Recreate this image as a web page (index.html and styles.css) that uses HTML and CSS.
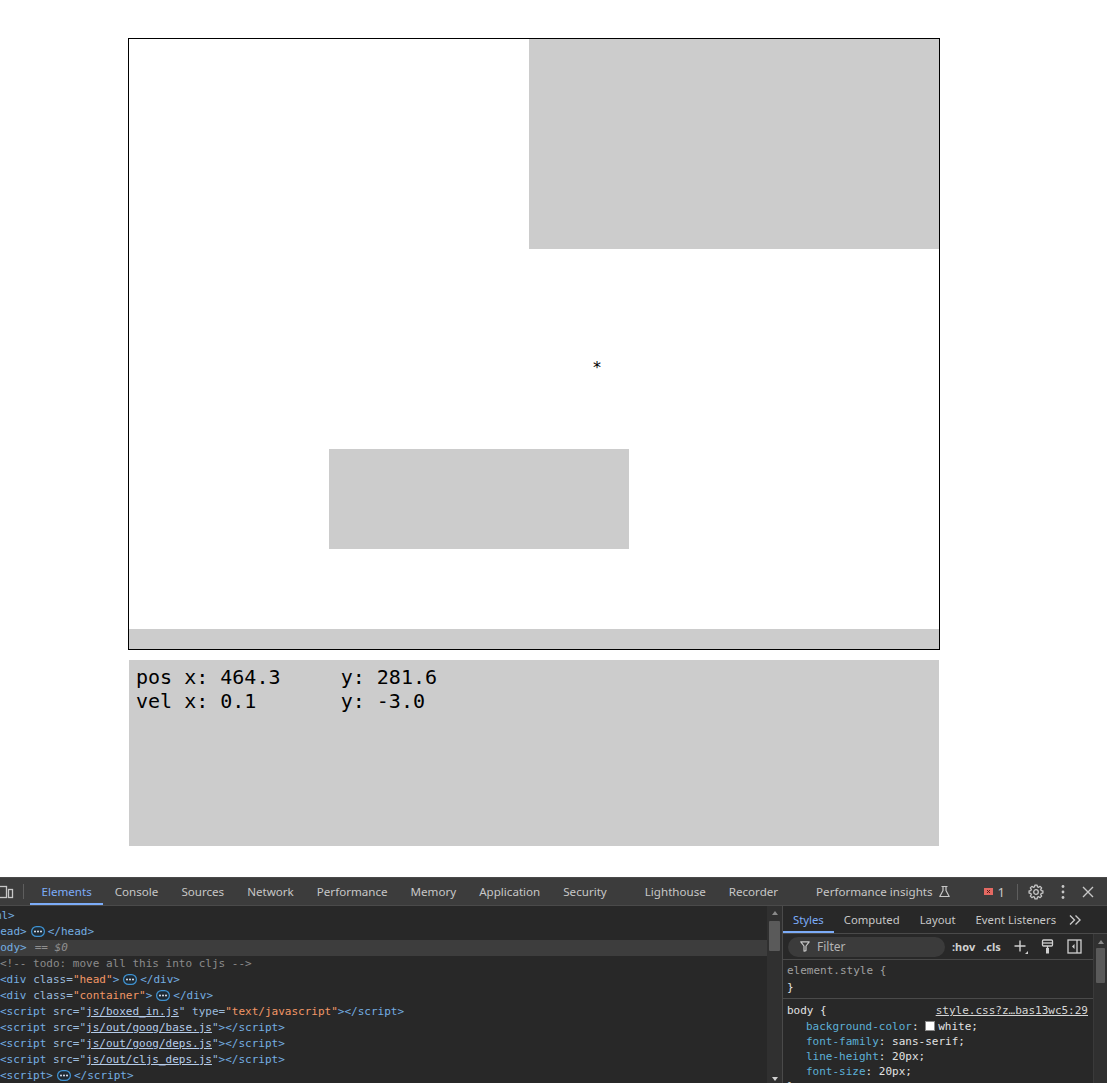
FILE: index.html
```html
<!DOCTYPE html>
<html>
<head>
<meta charset="utf-8">
<title>boxed in</title>
<link rel="stylesheet" href="styles.css">
</head>
<body>
<div class="viewport">
  <div class="app">
    <div class="stage">
      <div class="block block-a"></div>
      <div class="block block-b"></div>
      <span class="ship">*</span>
      <div class="floor"></div>
    </div>
    <div class="info"><div>pos x: 464.3     y: 281.6</div><div>vel x: 0.1       y: -3.0</div></div>
  </div>
</div>

<div class="devtools">
  <div class="dt-toolbar">
    <div class="dt-device">
      <svg width="22" height="16" viewBox="0 0 22 16"><rect x="1.5" y="2.5" width="12" height="11" fill="none" stroke="#c7c7c7" stroke-width="1.3"/><rect x="15.5" y="5.5" width="4" height="8" fill="none" stroke="#c7c7c7" stroke-width="1.3"/></svg>
    </div>
    <div class="dt-sep"></div>
    <div class="dt-tabs">
      <div class="dt-tab active">Elements</div>
      <div class="dt-tab">Console</div>
      <div class="dt-tab">Sources</div>
      <div class="dt-tab">Network</div>
      <div class="dt-tab">Performance</div>
      <div class="dt-tab">Memory</div>
      <div class="dt-tab">Application</div>
      <div class="dt-tab">Security</div>
      <div class="dt-tab wide">Lighthouse</div>
      <div class="dt-tab">Recorder</div>
      <div class="dt-tab wide">Performance insights<svg class="flask" width="13" height="13" viewBox="0 0 13 13"><path d="M3.5 1.5h6M5 1.5v4L1.8 11.5h9.4L8 5.5v-4" fill="none" stroke="#c7c7c7" stroke-width="1.2" stroke-linejoin="round"/></svg></div>
    </div>
    <div class="dt-right">
      <div class="err"><svg width="9" height="7" viewBox="0 0 9 7"><rect width="9" height="7" fill="#e46962"/><path d="M3 2l3 3M6 2l-3 3" stroke="#5c1d1a" stroke-width="1"/></svg><span>1</span></div>
      <div class="dt-sep small"></div>
      <svg class="gear" width="16" height="16" viewBox="0 0 16 16"><polygon points="13.19,6.51 14.91,6.91 14.91,9.09 13.19,9.49 12.72,10.62 13.66,12.11 12.11,13.66 10.62,12.72 9.49,13.19 9.09,14.91 6.91,14.91 6.51,13.19 5.38,12.72 3.89,13.66 2.34,12.11 3.28,10.62 2.81,9.49 1.09,9.09 1.09,6.91 2.81,6.51 3.28,5.38 2.34,3.89 3.89,2.34 5.38,3.28 6.51,2.81 6.91,1.09 9.09,1.09 9.49,2.81 10.62,3.28 12.11,2.34 13.66,3.89 12.72,5.38" fill="none" stroke="#c7c7c7" stroke-width="1.3" stroke-linejoin="round"/><circle cx="8" cy="8" r="2.3" fill="none" stroke="#c7c7c7" stroke-width="1.3"/></svg>
      <svg class="kebab" width="16" height="16" viewBox="0 0 16 16"><circle cx="8" cy="2.5" r="1.4" fill="#c7c7c7"/><circle cx="8" cy="8" r="1.4" fill="#c7c7c7"/><circle cx="8" cy="13.5" r="1.4" fill="#c7c7c7"/></svg>
      <svg class="close" width="12" height="12" viewBox="0 0 12 12"><path d="M1 1l10 10M11 1L1 11" stroke="#c7c7c7" stroke-width="1.4"/></svg>
    </div>
  </div>

  <div class="dt-main">
    <div class="dt-elements">
      <div class="tree">
        <div class="row d0"><span class="tg">&lt;html&gt;</span></div>
        <div class="row d1"><span class="tg">&lt;head&gt;</span><svg class="more" width="14" height="11" viewBox="0 0 14 11"><rect x="0.6" y="0.6" width="12.8" height="9.8" rx="4.9" fill="#1f2a33" stroke="#3f93d2" stroke-width="1.2"/><circle cx="4" cy="5.5" r="1" fill="#dbe6f3"/><circle cx="7" cy="5.5" r="1" fill="#dbe6f3"/><circle cx="10" cy="5.5" r="1" fill="#dbe6f3"/></svg><span class="tg">&lt;/head&gt;</span></div>
        <div class="row d1 sel"><span class="tg">&lt;body&gt;</span><span class="eq">== $0</span></div>
        <div class="row d2"><span class="cm">&lt;!-- todo: move all this into cljs --&gt;</span></div>
        <div class="row d2"><span class="tg">&lt;div</span> <span class="an">class</span><span class="an">=</span><span class="av">"head"</span><span class="tg">&gt;</span><svg class="more" width="14" height="11" viewBox="0 0 14 11"><rect x="0.6" y="0.6" width="12.8" height="9.8" rx="4.9" fill="#1f2a33" stroke="#3f93d2" stroke-width="1.2"/><circle cx="4" cy="5.5" r="1" fill="#dbe6f3"/><circle cx="7" cy="5.5" r="1" fill="#dbe6f3"/><circle cx="10" cy="5.5" r="1" fill="#dbe6f3"/></svg><span class="tg">&lt;/div&gt;</span></div>
        <div class="row d2"><span class="tg">&lt;div</span> <span class="an">class</span><span class="an">=</span><span class="av">"container"</span><span class="tg">&gt;</span><svg class="more" width="14" height="11" viewBox="0 0 14 11"><rect x="0.6" y="0.6" width="12.8" height="9.8" rx="4.9" fill="#1f2a33" stroke="#3f93d2" stroke-width="1.2"/><circle cx="4" cy="5.5" r="1" fill="#dbe6f3"/><circle cx="7" cy="5.5" r="1" fill="#dbe6f3"/><circle cx="10" cy="5.5" r="1" fill="#dbe6f3"/></svg><span class="tg">&lt;/div&gt;</span></div>
        <div class="row d2"><span class="tg">&lt;script</span> <span class="an">src</span><span class="an">="</span><span class="lk">js/boxed_in.js</span><span class="an">"</span> <span class="an">type</span><span class="an">=</span><span class="av">"text/javascript"</span><span class="tg">&gt;&lt;/script&gt;</span></div>
        <div class="row d2"><span class="tg">&lt;script</span> <span class="an">src</span><span class="an">="</span><span class="lk">js/out/goog/base.js</span><span class="an">"</span><span class="tg">&gt;&lt;/script&gt;</span></div>
        <div class="row d2"><span class="tg">&lt;script</span> <span class="an">src</span><span class="an">="</span><span class="lk">js/out/goog/deps.js</span><span class="an">"</span><span class="tg">&gt;&lt;/script&gt;</span></div>
        <div class="row d2"><span class="tg">&lt;script</span> <span class="an">src</span><span class="an">="</span><span class="lk">js/out/cljs_deps.js</span><span class="an">"</span><span class="tg">&gt;&lt;/script&gt;</span></div>
        <div class="row d2"><span class="tg">&lt;script&gt;</span><svg class="more" width="14" height="11" viewBox="0 0 14 11"><rect x="0.6" y="0.6" width="12.8" height="9.8" rx="4.9" fill="#1f2a33" stroke="#3f93d2" stroke-width="1.2"/><circle cx="4" cy="5.5" r="1" fill="#dbe6f3"/><circle cx="7" cy="5.5" r="1" fill="#dbe6f3"/><circle cx="10" cy="5.5" r="1" fill="#dbe6f3"/></svg><span class="tg">&lt;/script&gt;</span></div>
      </div>
    </div>
    <div class="vscroll el-scroll">
      <span class="arrow up"></span>
      <span class="thumb"></span>
      <span class="arrow down"></span>
    </div>

    <div class="dt-sidebar">
      <div class="sb-tabs">
        <div class="sb-tab active">Styles</div>
        <div class="sb-tab">Computed</div>
        <div class="sb-tab">Layout</div>
        <div class="sb-tab">Event Listeners</div>
        <svg class="chev" width="14" height="12" viewBox="0 0 14 12"><path d="M2 1.5l4.5 4.5L2 10.5M7.5 1.5L12 6l-4.5 4.5" fill="none" stroke="#c7c7c7" stroke-width="1.4"/></svg>
      </div>
      <div class="sb-body">
        <div class="sb-content">
          <div class="sb-filter">
            <div class="filter-box">
              <svg width="10" height="11" viewBox="0 0 10 11"><path d="M0.8 0.8h8.4L6 5v4.6L4 10.2V5z" fill="none" stroke="#c7c7c7" stroke-width="1.2" stroke-linejoin="round"/></svg>
              <span>Filter</span>
            </div>
            <span class="fbtn hov">:hov</span>
            <span class="fbtn cls">.cls</span>
            <svg class="fbtn plus" width="16" height="16" viewBox="0 0 16 16"><path d="M7 1.5v11M1.5 7h11" stroke="#d0d0d0" stroke-width="1.4"/><path d="M15 12v3h-3z" fill="#d0d0d0"/></svg>
            <svg class="fbtn brush" width="13" height="15" viewBox="0 0 13 15"><rect x="1.5" y="1" width="10" height="6" rx="1" fill="none" stroke="#d0d0d0" stroke-width="1.3"/><path d="M1.5 4h10" stroke="#d0d0d0" stroke-width="1.3"/><path d="M6.5 7v2" stroke="#d0d0d0" stroke-width="1.3"/><rect x="5" y="9" width="3" height="5.5" fill="#d0d0d0"/></svg>
            <svg class="fbtn toggle" width="15" height="15" viewBox="0 0 15 15"><rect x="1" y="1" width="13" height="13" fill="none" stroke="#d0d0d0" stroke-width="1.3"/><path d="M10 1v13" stroke="#d0d0d0" stroke-width="1.3"/><path d="M7.5 5v5L5 7.5z" fill="#d0d0d0"/></svg>
          </div>
          <div class="rule first">
            <div class="ln sel-name">element.style {</div>
            <div class="ln">}</div>
          </div>
          <div class="rule second">
            <div class="ln head-ln"><a class="src">style.css?z…bas13wc5:29</a>body {</div>
            <div class="ln prop"><span class="pn">background-color</span>: <span class="sw"></span>white;</div>
            <div class="ln prop"><span class="pn">font-family</span>: sans-serif;</div>
            <div class="ln prop"><span class="pn">line-height</span>: 20px;</div>
            <div class="ln prop"><span class="pn">font-size</span>: 20px;</div>
            <div class="ln">}</div>
          </div>
        </div>
        <div class="vscroll sb-scroll">
          <span class="arrow up"></span>
          <span class="thumb"></span>
        </div>
      </div>
    </div>
  </div>
</div>
</body>
</html>
```

FILE: styles.css
```css
* { box-sizing: border-box; }
html, body { margin: 0; padding: 0; }
body {
  width: 1107px;
  height: 1083px;
  overflow: hidden;
  background: #fff;
  display: flex;
  flex-direction: column;
  font-family: "DejaVu Sans", sans-serif;
}

/* ---------- page ---------- */
.viewport { height: 877px; flex: none; background: #fff; }
.app { padding: 38px 0 0 128px; }
.stage {
  position: relative;
  width: 812px;
  height: 612px;
  border: 1px solid #000;
  background: #fff;
}
.block { position: absolute; background: #cccccc; }
.block-a { left: 400px; top: 0; width: 410px; height: 210px; }
.block-b { left: 200px; top: 410px; width: 300px; height: 100px; }
.floor { position: absolute; left: 0; right: 0; bottom: 0; height: 20px; background: #cccccc; }
.ship {
  position: absolute;
  left: 464px;
  top: 321px;
  font: 16px/16px "DejaVu Sans", sans-serif;
  color: #000;
}
.info {
  margin: 10px 0 0 1px;
  width: 810px;
  height: 186px;
  background: #cccccc;
  padding: 5px 7px;
  font: 20px/24px "DejaVu Sans Mono", monospace;
  white-space: pre;
  color: #000;
}

/* ---------- devtools ---------- */
.devtools {
  flex: 1;
  min-height: 0;
  background: #282828;
  border-top: 1px solid #4a4a4a;
  display: flex;
  flex-direction: column;
  font-family: "Noto Sans", sans-serif;
  font-size: 11.6px;
  color: #c7c7c7;
  overflow: hidden;
}
.dt-toolbar {
  height: 28px;
  flex: none;
  background: #3c3c3c;
  border-bottom: 1px solid #4a4a4a;
  display: flex;
  align-items: stretch;
}
.dt-device { width: 23px; display: flex; align-items: center; flex: none; overflow: hidden; }
.dt-device svg { flex: none; margin-left: -7px; }
.dt-sep { width: 1px; background: #5e5e5e; margin: 6px 0; flex: none; }
.dt-tabs { display: flex; margin-left: 6px; }
.dt-tab {
  position: relative;
  display: flex;
  align-items: center;
  padding: 0 11.5px;
  white-space: nowrap;
  color: #c7c7c7;
}
.dt-tab.wide { margin-left: 15px; }
.dt-tab.active { color: #7cacf8; }
.dt-tab.active::after {
  content: "";
  position: absolute;
  left: 0; right: 0; bottom: 0;
  height: 2px;
  background: #7cacf8;
}
.flask { margin-left: 5px; }
.dt-right { margin-left: auto; display: flex; align-items: center; padding-right: 13px; }
.err { display: flex; align-items: center; gap: 5px; font-size: 13px; color: #c7c7c7; }
.dt-sep.small { height: 16px; margin: 0 10px 0 12px; }
.gear { margin-right: 11px; }
.kebab { margin-right: 11px; }

.dt-main { flex: 1; min-height: 0; display: flex; }
.dt-elements {
  width: 767px;
  flex: none;
  overflow: hidden;
  padding-top: 2px;
  font: 11px/16px "DejaVu Sans Mono", monospace;
  color: #c7c7c7;
}
.tree { margin-left: -25px; }
.row { height: 16px; white-space: pre; }
.row.d1 { padding-left: 12px; }
.row.d2 { padding-left: 25px; }
.row.sel { background: #3d3d3d; }
.tg { color: #74aee2; }
.an { color: #9bbbdc; }
.av { color: #f29766; }
.cm { color: #8b8b8b; }
.lk { color: #b6cce8; text-decoration: underline; }
.eq { color: #8f8f8f; font-style: italic; margin-left: 8px; }
.more { margin: 0 3px 0 4px; vertical-align: -2px; }

.vscroll { position: relative; background: #303030; flex: none; }
.el-scroll { width: 15px; }
.vscroll .thumb { position: absolute; left: 2px; right: 2px; background: #5a5a5a; border-radius: 1px; }
.el-scroll .thumb { top: 15px; height: 30px; }
.arrow { position: absolute; left: 50%; width: 0; height: 0; margin-left: -3px; border-left: 3px solid transparent; border-right: 3px solid transparent; }
.arrow.up { top: 5px; border-bottom: 4px solid #8a8a8a; }
.arrow.down { bottom: 2px; border-top: 4px solid #d0d0d0; }

.dt-sidebar {
  flex: 1;
  min-width: 0;
  border-left: 1px solid #4a4a4a;
  display: flex;
  flex-direction: column;
}
.sb-tabs {
  height: 28px;
  flex: none;
  display: flex;
  align-items: stretch;
  border-bottom: 1px solid #4a4a4a;
  font-size: 11.3px;
}
.sb-tab { position: relative; display: flex; align-items: center; padding: 0 10px; white-space: nowrap; color: #c7c7c7; }
.sb-tab.active { color: #7cacf8; }
.sb-tab.active::after { content: ""; position: absolute; left: 0; right: 0; bottom: 0; height: 2px; background: #7cacf8; }
.chev { align-self: center; margin-left: 2px; }

.sb-body { flex: 1; min-height: 0; display: flex; }
.sb-content { flex: 1; min-width: 0; border-right: 1px solid #3a3a3a; }
.sb-scroll { width: 13px; }
.sb-scroll .arrow.up { top: 6px; }
.sb-scroll .thumb { top: 14px; height: 35px; }

.sb-filter {
  height: 26px;
  display: flex;
  align-items: center;
  border-bottom: 1px solid #4a4a4a;
  padding-left: 5px;
}
.filter-box {
  width: 157px;
  height: 20px;
  border-radius: 10px;
  background: #3b3b3b;
  display: flex;
  align-items: center;
  padding-left: 12px;
  gap: 7px;
  color: #b4b4b4;
  font-size: 12px;
}
.fbtn { flex: none; }
.hov { margin-left: 7px; font-weight: 700; font-size: 11px; color: #d0d0d0; }
.cls { margin-left: 8px; font-weight: 700; font-size: 11px; color: #d0d0d0; }
.plus { margin-left: 12px; }
.brush { margin-left: 12px; }
.toggle { margin-left: 13px; }

.rule { border-bottom: 1px solid #4a4a4a; padding: 0 4px; font: 11px/16px "DejaVu Sans Mono", monospace; color: #e3e3e3; }
.rule.first { height: 39px; padding-top: 2px; }
.rule.first .ln { line-height: 17px; }
.rule.second { padding-top: 3px; }
.head-ln { line-height: 17px; }
.ln { white-space: pre; }
.sel-name { color: #a0a0a0; }
.prop { padding-left: 19px; line-height: 15px; }
.pn { color: #5db0d7; }
.src { float: right; color: #d6d6d6; text-decoration: underline; margin-right: 1px; }
.sw { display: inline-block; width: 10px; height: 10px; background: #fff; border: 1px solid #888; margin-right: 3px; vertical-align: -1px; }
```
